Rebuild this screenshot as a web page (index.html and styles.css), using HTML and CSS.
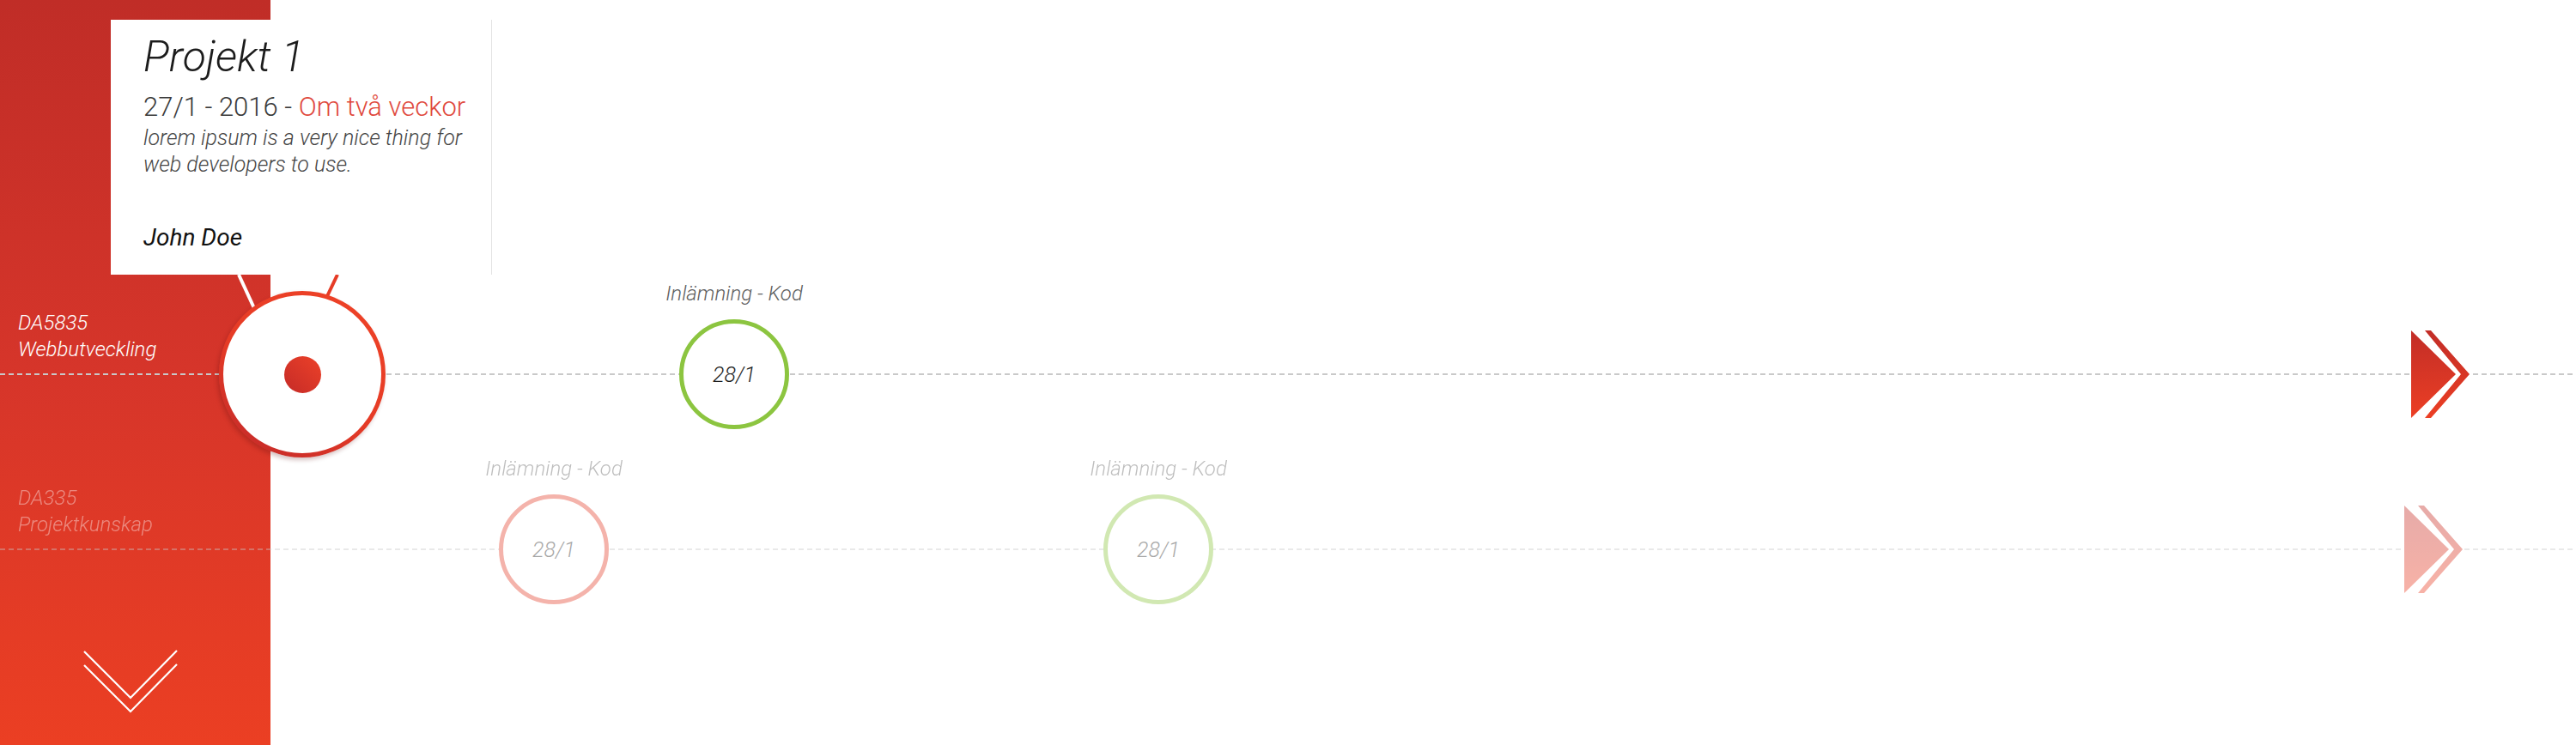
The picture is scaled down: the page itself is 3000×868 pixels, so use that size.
FILE: index.html
```html
<!DOCTYPE html>
<html lang="sv">
<head>
<meta charset="utf-8">
<title>Tidslinje</title>
<link rel="stylesheet" href="styles.css">
</head>
<body>
<div class="app">
  <aside class="sidebar">
    <svg class="scroll-down" width="112" height="76" viewBox="0 0 112 76">
      <polyline points="1,2 55,56 109,1" />
      <polyline points="1,18 55,72 109,17" />
    </svg>
  </aside>

  <main class="rows">
    <section class="row">
      <div class="row-label">
        <div>DA5835</div>
        <div>Webbutveckling</div>
      </div>
      <div class="row-line">
        <div class="event event-current" style="left:352px"><span class="dot"></span></div>
        <div class="event event-green" style="left:855px">
          <span class="event-label">Inlämning - Kod</span>
          <span class="event-date">28/1</span>
        </div>
        <svg class="row-end" style="left:2808px" width="68" height="102" viewBox="0 0 68 102">
          <defs>
            <linearGradient id="ag1" x1="0" y1="0" x2="0" y2="1">
              <stop offset="0" stop-color="#c22d27"/>
              <stop offset="1" stop-color="#ec3f24"/>
            </linearGradient>
          </defs>
          <polygon points="0,0 52,51 0,102" fill="url(#ag1)"/>
          <polygon points="16,0 23,0 68,51 23,102 16,102 58,51" fill="url(#ag1)"/>
        </svg>
      </div>
    </section>

    <section class="row row-faded">
      <div class="row-label">
        <div>DA335</div>
        <div>Projektkunskap</div>
      </div>
      <div class="row-line">
        <div class="event event-red" style="left:645px">
          <span class="event-label">Inlämning - Kod</span>
          <span class="event-date">28/1</span>
        </div>
        <div class="event event-green" style="left:1349px">
          <span class="event-label">Inlämning - Kod</span>
          <span class="event-date">28/1</span>
        </div>
        <svg class="row-end" style="left:2800px" width="68" height="102" viewBox="0 0 68 102">
          <defs>
            <linearGradient id="ag2" x1="0" y1="0" x2="0" y2="1">
              <stop offset="0" stop-color="#c22d27"/>
              <stop offset="1" stop-color="#ec3f24"/>
            </linearGradient>
          </defs>
          <polygon points="0,0 52,51 0,102" fill="url(#ag2)"/>
          <polygon points="16,0 23,0 68,51 23,102 16,102 58,51" fill="url(#ag2)"/>
        </svg>
      </div>
    </section>
  </main>

  <svg class="connector" width="140" height="60" viewBox="0 0 140 60">
    <line x1="3" y1="0" x2="27" y2="52" stroke="#ffffff" stroke-width="4"/>
    <line x1="118" y1="0" x2="98" y2="42" stroke="#e63c26" stroke-width="4"/>
  </svg>

  <article class="popover">
    <h1 class="popover-title">Projekt 1</h1>
    <p class="popover-date">27/1 - 2016 - <span class="popover-due">Om två veckor</span></p>
    <p class="popover-text">lorem ipsum is a very nice thing for web developers to use.</p>
    <p class="popover-author">John Doe</p>
  </article>
</div>
</body>
</html>
```

FILE: styles.css
```css
* { box-sizing: border-box; }

html, body {
  margin: 0;
  padding: 0;
  background: #ffffff;
}

body {
  font-family: Roboto, "Liberation Sans", sans-serif;
  width: 3000px;
  height: 868px;
  overflow: hidden;
}

.app {
  position: relative;
  width: 3000px;
  height: 868px;
  display: grid;
  grid-template-columns: 315px 1fr;
  grid-template-rows: 868px;
  overflow: hidden;
}

.sidebar {
  grid-column: 1;
  grid-row: 1;
  background: linear-gradient(180deg, #c02d27 0%, #d6352a 50%, #eb3f23 100%);
  display: flex;
  flex-direction: column;
  justify-content: flex-end;
  align-items: flex-start;
  padding: 0 0 35px 97px;
}

.scroll-down polyline {
  fill: none;
  stroke: #ffffff;
  stroke-width: 2.2;
}

.rows {
  grid-column: 1 / -1;
  grid-row: 1;
  padding-top: 361px;
  display: flex;
  flex-direction: column;
  gap: 128px;
}

.row-label {
  padding-left: 21px;
  font-size: 24px;
  line-height: 31px;
  font-weight: 300;
  font-style: italic;
  color: #ffffff;
  height: 62px;
}

.row-line {
  position: relative;
  margin-top: 12px;
  height: 2px;
  background: repeating-linear-gradient(90deg, #c9c9c9 0 6px, transparent 6px 10px);
}

.row-faded { opacity: 0.4; }

.event {
  position: absolute;
  top: 50%;
  width: 128px;
  height: 128px;
  margin: -64px 0 0 -64px;
  border-radius: 50%;
  border: 5px solid #8cc540;
  background: #ffffff;
  display: flex;
  align-items: center;
  justify-content: center;
}

.event-green { border-color: #8cc540; }
.event-red { border-color: #e4432d; }

.event-date {
  font-size: 25px;
  font-weight: 300;
  font-style: italic;
  color: #1e1e1e;
  line-height: 1;
}

.event-label {
  position: absolute;
  bottom: calc(100% + 21px);
  left: 50%;
  transform: translateX(-50%);
  white-space: nowrap;
  font-size: 24px;
  line-height: 28px;
  font-weight: 300;
  font-style: italic;
  color: #5e5e5e;
}

.event-current {
  width: 194px;
  height: 194px;
  margin: -97px 0 0 -97px;
  border: 5px solid transparent;
  background:
    linear-gradient(#ffffff, #ffffff) padding-box,
    linear-gradient(30deg, #c0282a 0%, #e53b26 45%, #ef4327 100%) border-box;
  box-shadow: -2px 3px 5px rgba(90, 10, 10, 0.25);
  z-index: 2;
}

.dot {
  width: 43px;
  height: 43px;
  border-radius: 50%;
  background: linear-gradient(225deg, #ec4129 0%, #c52b27 100%);
}

.row-end {
  position: absolute;
  top: 50%;
  margin-top: -51px;
  background: #ffffff;
  display: block;
}

.connector {
  position: absolute;
  left: 275px;
  top: 320px;
  z-index: 1;
}

.popover {
  position: absolute;
  left: 129px;
  top: 23px;
  width: 444px;
  height: 297px;
  background: #ffffff;
  border-right: 1px solid #e3e3e3;
  padding: 13px 14px 0 38px;
  z-index: 3;
}

.popover-title {
  margin: 0;
  font-size: 50px;
  line-height: 60px;
  font-weight: 300;
  font-style: italic;
  color: #1c1c1c;
}

.popover-date {
  margin: 9px 0 0;
  font-size: 31px;
  line-height: 40px;
  font-weight: 300;
  color: #3a3a3a;
  white-space: nowrap;
}

.popover-due { color: #e0493d; }

.popover-text {
  margin: 0;
  font-size: 25px;
  line-height: 31px;
  font-weight: 300;
  font-style: italic;
  color: #454545;
}

.popover-author {
  margin: 53px 0 0;
  font-size: 28px;
  line-height: 34px;
  font-weight: 400;
  font-style: italic;
  color: #111111;
}
```
